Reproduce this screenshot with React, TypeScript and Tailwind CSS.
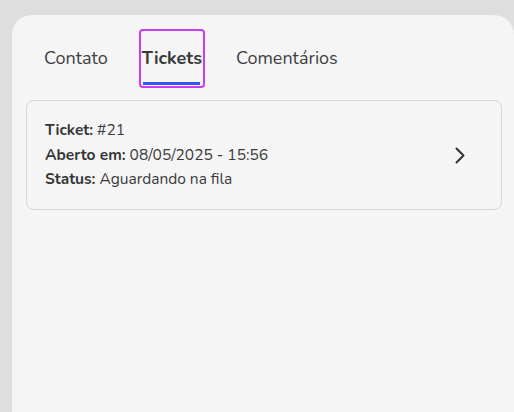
export default function App() {
  const font = { fontFamily: '"Nunito", "Open Sans", "Noto Sans", sans-serif' };
  return (
    <div className="min-h-[412px] w-[514px] bg-[#dedede] pt-[15px] pl-[12px] overflow-hidden" style={font}>
      <div className="h-[397px] rounded-tl-[20px] rounded-tr-[20px] bg-[#f5f5f5] pt-[14px]">
        <div className="flex items-stretch gap-[27px] pl-[28px]">
          <button className="relative flex h-[59px] items-center px-[4px] text-[18px] text-[#3f3f3f]">
            Contato
          </button>
          <button className="relative flex h-[59px] items-center rounded-[4px] border-2 border-[#c93cf6] px-[1px] text-[18px] font-bold text-[#3a3a3a]">
            Tickets
            <span className="absolute bottom-[1px] left-[2px] right-[3px] h-[3px] bg-[#3555f0]" />
          </button>
          <button className="relative flex h-[59px] items-center px-[4px] text-[18px] text-[#3f3f3f]">
            Comentários
          </button>
        </div>
        <div className="ml-[14px] mr-[12px] mt-[12px] flex items-center rounded-[8px] border border-[#d4d6dc] pl-[18px] pr-[36px] pt-[17px] pb-[17px]">
          <div className="flex flex-1 flex-col text-[15.5px] leading-[24.5px] text-[#3a3a3a]">
            <div><span className="font-bold text-[#363636]">Ticket:</span> #21</div>
            <div><span className="font-bold text-[#363636]">Aberto em:</span> 08/05/2025 - 15:56</div>
            <div><span className="font-bold text-[#363636]">Status:</span> Aguardando na fila</div>
          </div>
          <svg width="10" height="17" viewBox="0 0 10 17" fill="none" className="mt-[2px]">
            <path d="M1.5 1.5 L8.5 8.5 L1.5 15.5" stroke="#333" strokeWidth="2" strokeLinecap="round" strokeLinejoin="round" />
          </svg>
        </div>
      </div>
    </div>
  );
}
